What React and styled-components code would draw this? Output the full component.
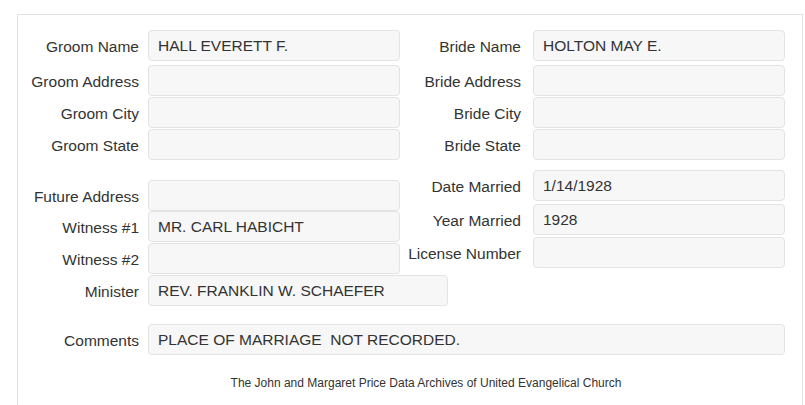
import styled, { createGlobalStyle } from "styled-components";

const GlobalStyle = createGlobalStyle`
  html, body {
    margin: 0;
    padding: 0;
    background: #fff;
  }
  body {
    font-family: "Liberation Sans", Arial, sans-serif;
    color: #333;
  }
`;

function Field({ label, value, side, width, mb }) {
  return (
    <Row $mb={mb}>
      <Label $side={side}>{label}</Label>
      <Box $width={width}>{value}</Box>
    </Row>
  );
}

function App() {
  return (
    <>
      <GlobalStyle />
      <Page>
        <Panel>
          <Section>
            <Column>
              <Field label="Groom Name" value="HALL EVERETT F." mb={4} />
              <Field label="Groom Address" />
              <Field label="Groom City" />
              <Field label="Groom State" />
            </Column>
            <Column>
              <Field side="right" label="Bride Name" value="HOLTON MAY E." mb={4} />
              <Field side="right" label="Bride Address" />
              <Field side="right" label="Bride City" />
              <Field side="right" label="Bride State" />
            </Column>
          </Section>

          <Section $top={9}>
            <Column $top={10}>
              <Field label="Future Address" mb={0} />
              <Field label="Witness #1" value="MR. CARL HABICHT" />
              <Field label="Witness #2" />
              <Field label="Minister" value="REV. FRANKLIN W. SCHAEFER" width={300} />
            </Column>
            <Column>
              <Field side="right" label="Date Married" value="1/14/1928" mb={3} />
              <Field side="right" label="Year Married" value="1928" mb={2} />
              <Field side="right" label="License Number" />
            </Column>
          </Section>

          <Section $top={17}>
            <Field label="Comments" value="PLACE OF MARRIAGE  NOT RECORDED." width={637} />
          </Section>

          <Footer>The John and Margaret Price Data Archives of United Evangelical Church</Footer>
        </Panel>
      </Page>
    </>
  );
}

export default App;

const Page = styled.div`
  padding: 14px 2px 0 17px;
`;

const Panel = styled.div`
  border: 1px solid #e3e3e3;
  border-bottom: none;
  padding: 15px 0 30px 0;
  min-height: 380px;
  box-sizing: border-box;
`;

const Section = styled.div`
  display: flex;
  align-items: flex-start;
  margin-top: ${(p) => p.$top || 0}px;
`;

const Column = styled.div`
  width: 382px;
  display: flex;
  flex-direction: column;
  margin-top: ${(p) => p.$top || 0}px;
`;

const Row = styled.div`
  display: flex;
  align-items: center;
  margin-bottom: ${(p) => (p.$mb !== undefined ? p.$mb : 1)}px;
`;

const Label = styled.div`
  flex: 0 0 auto;
  width: 121px;
  padding-right: ${(p) => (p.$side === "right" ? 12 : 9)}px;
  padding-top: 2px;
  display: flex;
  justify-content: flex-end;
  font-size: 15.5px;
  white-space: nowrap;
  color: #333;
`;

const Box = styled.div`
  flex: 0 0 auto;
  box-sizing: border-box;
  width: ${(p) => p.$width || 252}px;
  height: 31px;
  padding: 0 9px;
  display: flex;
  align-items: center;
  background: #f7f7f7;
  border: 1px solid #e3e3e3;
  border-radius: 4px;
  font-size: 15.5px;
  color: #333;
  white-space: pre;
`;

const Footer = styled.div`
  margin-top: 20px;
  text-align: center;
  font-size: 12px;
  color: #333;
  padding-left: 32px;
`;
